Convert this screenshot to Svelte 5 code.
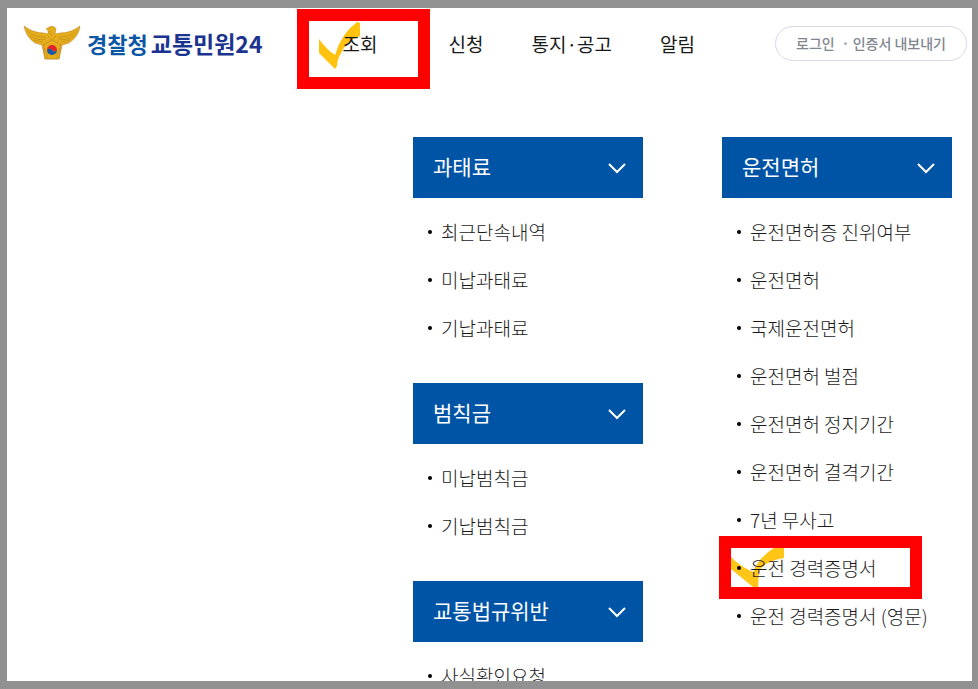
<script>
	const menu = [
		{ title: '조회', marked: true },
		{ title: '신청' },
		{ title: '통지·공고' },
		{ title: '알림' }
	];

	const columns = [
		[
			{
				title: '과태료',
				items: [{ name: '최근단속내역' }, { name: '미납과태료' }, { name: '기납과태료' }]
			},
			{
				title: '범칙금',
				items: [{ name: '미납범칙금' }, { name: '기납범칙금' }]
			},
			{
				title: '교통법규위반',
				items: [{ name: '사실확인요청' }]
			}
		],
		[
			{
				title: '운전면허',
				items: [
					{ name: '운전면허증 진위여부' },
					{ name: '운전면허' },
					{ name: '국제운전면허' },
					{ name: '운전면허 벌점' },
					{ name: '운전면허 정지기간' },
					{ name: '운전면허 결격기간' },
					{ name: '7년 무사고' },
					{ name: '운전 경력증명서', marked: true },
					{ name: '운전 경력증명서 (영문)' }
				]
			}
		]
	];
</script>

<div class="page">
	<header>
		<a class="logo" href="#home">
			<svg width="58" height="36" viewBox="0 0 58 36" aria-hidden="true">
				<g fill="#e5ac1b" stroke="#b67c20" stroke-width="0.5" stroke-linejoin="round">
					<path d="M1 1Q10 8 21 8L25 9L25 5L23 4L26 2Q31 0 33 4L32 9L37 8Q48 8 57 1Q56 11 46 18L39 20L36 34H22L19 20L12 18Q3 12 1 1Z" />
					<path d="M20 20L29 15L38 20L36 34H22Z" />
				</g>
				<path
					d="M4 6Q12 13 23 12M7 11Q14 16 22 14M11 15L20 17M54 6Q46 13 35 12M51 11Q44 16 36 14M47 15L38 17M25 11L29 15L33 11M21 23L25 31L22 34M37 23L33 31L36 34M27 6L29 11"
					fill="none"
					stroke="#c08c20"
					stroke-width="0.6"
				/>
				<path d="M24 25A5 5 0 0 1 34 25Q31 28 29 25T24 25Z" fill="#e3222b" />
				<path d="M24 25Q27 22 29 25T34 25A5 5 0 0 1 24 25Z" fill="#1558a8" />
			</svg>
			<span class="agency">경찰청</span>
			<span class="service">교통민원24</span>
		</a>
		<nav>
			{#each menu as item}
				<a href="#menu" class:current={item.marked}>
					{#if item.marked}
						<span class="mark mark-menu">
							<svg width="53" height="56" viewBox="0 0 53 56" aria-hidden="true">
								<path d="M10 18Q18 29 26 34Q32 13 48 1L51 2V15Q37 20 31 34Q28 39 28 45L26 48L10 32Z" fill="#ffc20e" />
							</svg>
						</span>
					{/if}
					{item.title}
				</a>
			{/each}
		</nav>
		<a class="login" href="#login">로그인 <i></i> 인증서 내보내기</a>
	</header>

	<main>
		{#each columns as groups}
			<div class="column">
				{#each groups as group}
					<section>
						<button type="button">
							{group.title}
							<svg width="18" height="12" viewBox="0 0 18 12" aria-hidden="true">
								<path d="M1 2L9 10L17 2" fill="none" stroke="#fff" stroke-width="2" />
							</svg>
						</button>
						<ul>
							{#each group.items as item}
								<li>
									<a href="#item">
										{#if item.marked}
											<span class="mark mark-item">
												<svg width="53" height="39" viewBox="0 0 53 39" aria-hidden="true">
													<path d="M0 9Q10 19 22 24Q29 8 43 0H53V10Q34 13 28 23L27 39H22L0 21Z" fill="#ffc517" />
												</svg>
											</span>
										{/if}
										{item.name}
									</a>
								</li>
							{/each}
						</ul>
					</section>
				{/each}
			</div>
		{/each}
	</main>
</div>

<style>
	:global(body) {
		margin: 0;
		background: #919191;
	}

	.page {
		box-sizing: border-box;
		height: 100vh;
		overflow: hidden;
		border: 8px solid #919191;
		border-width: 8px 6px 8px 7px;
		background: #fff;
		color: #1a1a1a;
		font-family: 'Noto Sans CJK KR', 'Noto Sans', sans-serif;
	}

	a {
		color: inherit;
		text-decoration: none;
		white-space: nowrap;
	}

	header {
		display: flex;
		align-items: center;
		height: 70px;
		padding: 0 5px 0 16px;
	}
	.logo {
		display: flex;
		align-items: center;
		font-size: 22px;
		font-weight: 700;
	}
	.agency {
		margin: 0 3px 0 6px;
		color: #0c57a5;
	}
	.service {
		color: #1b3490;
		font-size: 23px;
	}

	nav {
		display: flex;
		gap: 48px;
		margin-left: 80px;
		font-size: 19px;
		font-weight: 400;
	}
	nav a,
	li a {
		position: relative;
		isolation: isolate;
	}
	.current {
		margin-right: 23px;
	}

	.mark {
		position: absolute;
		z-index: -1;
		box-sizing: border-box;
		border: 12px solid #f00;
	}
	.mark svg {
		display: block;
	}
	.mark-menu {
		top: -21px;
		left: -46px;
		width: 133px;
		height: 80px;
	}
	.mark-item {
		top: -8px;
		left: -31px;
		width: 203px;
		height: 63px;
	}

	.login {
		display: flex;
		align-items: center;
		box-sizing: border-box;
		height: 35px;
		margin-left: auto;
		padding: 0 20px;
		border: 1px solid #d9d9e8;
		border-radius: 18px;
		color: #82868f;
		font-size: 14px;
		font-weight: 500;
	}
	.login i {
		width: 3px;
		height: 3px;
		margin: 0 6px 0 9px;
		border-radius: 50%;
		background: #a9b0bd;
	}

	main {
		display: flex;
		justify-content: flex-end;
		gap: 79px;
		padding: 59px 20px 0;
	}
	.column {
		width: 230px;
	}
	section {
		margin-bottom: 31px;
	}
	button {
		display: flex;
		align-items: center;
		justify-content: space-between;
		width: 100%;
		height: 61px;
		padding: 0 17px 3px 20px;
		border: 0;
		background: #0054a6;
		color: #fff;
		font-family: inherit;
		font-size: 21px;
	}
	button svg {
		margin-top: 3px;
	}
	ul {
		margin: 0;
		padding: 10px 0 0 15px;
		list-style: none;
	}
	li {
		display: flex;
		align-items: center;
		height: 48px;
		font-size: 19px;
		font-weight: 300;
		line-height: 48px;
	}
	li::before {
		content: '';
		position: relative;
		z-index: 1;
		width: 4px;
		height: 4px;
		margin-right: 9px;
		border-radius: 50%;
		background: #000;
	}
</style>
